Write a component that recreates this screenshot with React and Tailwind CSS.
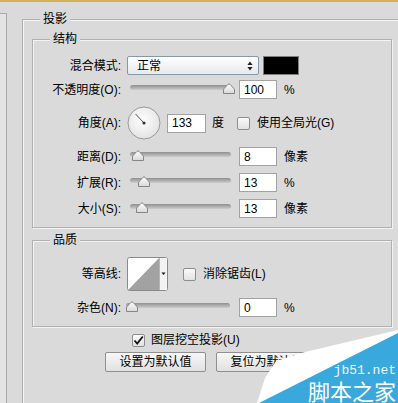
import React from 'react';

const Label = ({ children, className = '' }) => (
  <div className={`w-[88px] shrink-0 text-right whitespace-nowrap ${className}`}>{children}</div>
);

const Field = ({ value, className = '' }) => (
  <div className={`h-[19px] shrink-0 bg-white border border-[#a2a2a2] pl-[4px] flex items-center ${className}`}>
    {value}
  </div>
);

const Check = ({ checked = false, className = '' }) => (
  <div
    className={`w-[13px] h-[13px] shrink-0 border border-[#8e8e8e] rounded-[2px] bg-linear-to-b from-[#fafafa] to-[#e2e2e2] flex items-center justify-center ${className}`}
  >
    {checked && (
      <svg width="11" height="11" viewBox="0 0 11 11">
        <path d="M1.5 5.5 L4.2 8.5 L9.8 1.5" fill="none" stroke="#111" strokeWidth="1.8" />
      </svg>
    )}
  </div>
);

const Thumb = ({ left }) => (
  <svg width="12" height="11" viewBox="0 0 12 11" className="absolute top-0" style={{ left }}>
    <defs>
      <linearGradient id="thumbFill" x1="0" y1="0" x2="0" y2="1">
        <stop offset="0" stopColor="#fdfdfd" />
        <stop offset="1" stopColor="#d8d8d8" />
      </linearGradient>
    </defs>
    <path
      d="M0.5 10.5 V7 Q0.5 6 1.4 5.2 L5 1.3 Q6 0.4 7 1.3 L10.6 5.2 Q11.5 6 11.5 7 V10.5 Z"
      fill="url(#thumbFill)"
      stroke="#858585"
    />
  </svg>
);

const Slider = ({ className = '', pos }) => (
  <div className={`relative h-[12px] shrink-0 ${className}`}>
    <div className="absolute left-0 right-0 top-[2px] h-[5px] rounded-full bg-linear-to-b from-[#8f8f8f] to-[#cdcdcd]" />
    <Thumb left={pos} />
  </div>
);

const GroupBox = ({ title, className = '', children }) => (
  <div className={`relative border border-[#b0b0b0] shadow-[inset_1px_1px_0_#f3f3f3,1px_1px_0_#f3f3f3] ${className}`}>
    <span className="absolute -top-[8px] left-[17px] px-[3px] leading-[14px] bg-[#dadada]">{title}</span>
    {children}
  </div>
);

const SliderRow = ({ label, pos, value, unit, className = '' }) => (
  <div className={`flex items-center h-[19px] ${className}`}>
    <Label>{label}</Label>
    <Slider className="ml-[9px] w-[101px] -mt-[2px]" pos={pos} />
    <Field value={value} className="ml-[8px] w-[38px]" />
    <span className="ml-[7px]">{unit}</span>
  </div>
);

export default function App() {
  return (
    <div className="w-[398px] h-[403px] relative overflow-hidden bg-[#dadada] text-[12px] leading-[14px] text-black font-['Liberation_Sans','Noto_Sans_CJK_SC',sans-serif]">
      <div className="h-[2px] bg-[#d2b35c]" />
      <div className="flex">
        <div className="w-[7px] h-[420px] mt-[11px] shrink-0 border-t border-r border-[#a8a8a8] bg-[#e3e3e3]" />
        <div className="relative ml-[15px] mt-[17px] w-[400px] h-[420px] shrink-0 border-t border-l border-[#b0b0b0] shadow-[inset_1px_1px_0_#f3f3f3] pl-[9px] pt-[19px]">
          <span className="absolute -top-[8px] left-[17px] px-[3px] leading-[14px] bg-[#dadada]">投影</span>

          <GroupBox title="结构" className="w-[360px] h-[189px] pt-[16px]">
            <div className="flex items-center h-[19px]">
              <Label>混合模式:</Label>
              <div className="ml-[6px] w-[132px] h-[19px] border border-[#8796a8] rounded-[2px] bg-linear-to-b from-white to-[#e6e9ed] flex items-center justify-between pl-[9px] pr-[5px]">
                <span>正常</span>
                <svg width="6" height="10" viewBox="0 0 6 10">
                  <path d="M3 0.5 L5.6 4 H0.4 Z M3 9.5 L5.6 6 H0.4 Z" fill="#222" />
                </svg>
              </div>
              <div className="ml-[4px] w-[36px] h-[19px] border border-[#7d7d7d] bg-black" />
            </div>

            <div className="flex items-center h-[19px] mt-[5px]">
              <Label>不透明度(O):</Label>
              <Slider className="ml-[9px] w-[102px] -mt-[2px]" pos={93} />
              <Field value="100" className="ml-[7px] w-[38px]" />
              <span className="ml-[7px]">%</span>
            </div>

            <div className="flex items-center h-[36px] mt-[6px]">
              <Label>角度(A):</Label>
              <svg width="34" height="34" viewBox="0 0 34 34" className="ml-[6px] shrink-0">
                <defs>
                  <radialGradient id="dialFill" cx="0.45" cy="0.4" r="0.7">
                    <stop offset="0" stopColor="#ffffff" />
                    <stop offset="1" stopColor="#dedede" />
                  </radialGradient>
                </defs>
                <circle cx="17" cy="17" r="16" fill="url(#dialFill)" stroke="#9a9a9a" />
                <line x1="17" y1="17" x2="8.6" y2="8" stroke="#555" strokeWidth="1" />
                <circle cx="17" cy="17" r="1.6" fill="#333" />
              </svg>
              <Field value="133" className="ml-[6px] w-[39px]" />
              <span className="ml-[6px]">度</span>
              <Check className="ml-[13px]" />
              <span className="ml-[7px]">使用全局光(G)</span>
            </div>

            <SliderRow label="距离(D):" pos={2} value="8" unit="像素" className="mt-[6px]" />
            <SliderRow label="扩展(R):" pos={8} value="13" unit="%" className="mt-[7px]" />
            <SliderRow label="大小(S):" pos={6} value="13" unit="像素" className="mt-[7px]" />
          </GroupBox>

          <GroupBox title="品质" className="w-[360px] h-[87px] mt-[12px] pt-[16px]">
            <div className="flex items-center h-[34px]">
              <Label>等高线:</Label>
              <svg width="41" height="34" viewBox="0 0 41 34" className="ml-[6px] shrink-0">
                <rect x="0.5" y="0.5" width="40" height="33" rx="2" fill="#ffffff" stroke="#8a8a8a" />
                <polygon points="1,33 32,1 32,33" fill="#a2a2a2" />
                <line x1="32.5" y1="1" x2="32.5" y2="33" stroke="#b5b5b5" />
                <rect x="33" y="1" width="7" height="32" fill="#f3f3f3" />
                <polygon points="34.5,15.5 38.5,15.5 36.5,18" fill="#111" />
              </svg>
              <Check className="ml-[15px]" />
              <span className="ml-[7px]">消除锯齿(L)</span>
            </div>
            <div className="flex items-center h-[19px] mt-[7px]">
              <Label>杂色(N):</Label>
              <Slider className="ml-[5px] w-[104px] -mt-[2px]" pos={0} />
              <Field value="0" className="ml-[9px] w-[38px]" />
              <span className="ml-[7px]">%</span>
            </div>
          </GroupBox>

          <div className="flex items-center h-[14px] mt-[6px] pl-[100px]">
            <Check checked />
            <span className="ml-[6px]">图层挖空投影(U)</span>
          </div>

          <div className="flex gap-[10px] mt-[5px] pl-[73px]">
            <button className="w-[101px] h-[20px] border border-[#8f8f8f] rounded-[2px] bg-linear-to-b from-[#f7f7f7] to-[#e1e1e1] leading-[18px]">
              设置为默认值
            </button>
            <button className="w-[101px] h-[20px] border border-[#8f8f8f] rounded-[2px] bg-linear-to-b from-[#f7f7f7] to-[#e1e1e1] leading-[18px]">
              复位为默认值
            </button>
          </div>
        </div>
      </div>

      {/* jb51 corner watermark */}
      <svg width="143" height="75" viewBox="0 0 143 75" className="absolute left-[255px] top-[328px]">
        <polygon points="2,75 10,50 21,33 50,24 143,2 143,75" fill="#ffffff" />
        <polygon points="143,5 143,75 4,75" fill="#39a8dd" />
      </svg>
      <div className="absolute right-[2px] top-[364px] flex flex-col items-end">
        <span className="text-[13px] leading-[13px] text-[#eef8fd] font-['Liberation_Mono',monospace]">jb51.net</span>
        <span className="mt-[2px] text-[22px] leading-[22px] text-white font-['Noto_Sans_CJK_SC',sans-serif]">脚本之家</span>
      </div>
    </div>
  );
}
